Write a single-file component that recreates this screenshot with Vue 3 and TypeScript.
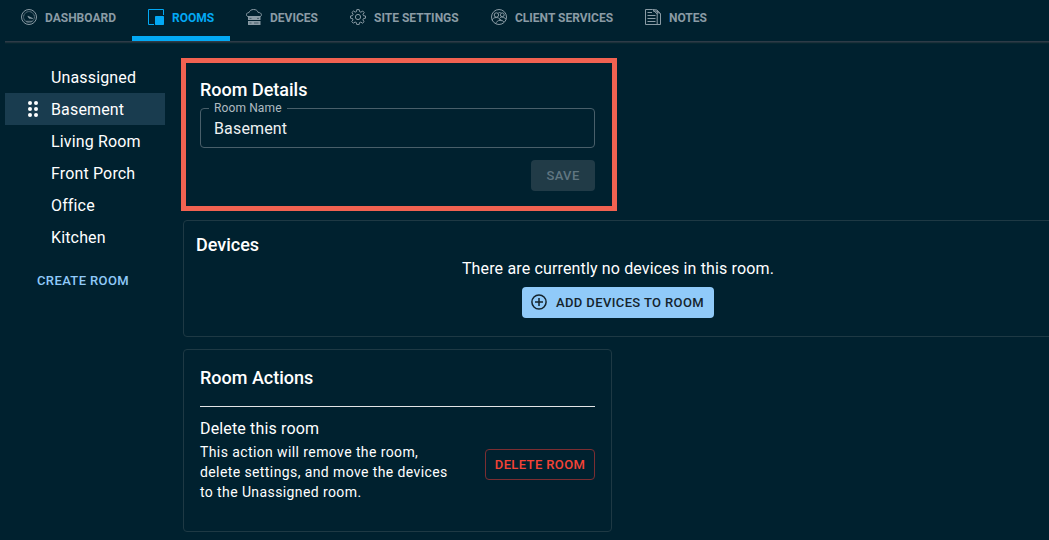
<script setup lang="ts">
import { ref } from 'vue'

interface Tab {
  id: string
  label: string
}

const tabs: Tab[] = [
  { id: 'dashboard', label: 'Dashboard' },
  { id: 'rooms', label: 'Rooms' },
  { id: 'devices', label: 'Devices' },
  { id: 'settings', label: 'Site Settings' },
  { id: 'clients', label: 'Client Services' },
  { id: 'notes', label: 'Notes' },
]
const rooms: string[] = ['Unassigned', 'Basement', 'Living Room', 'Front Porch', 'Office', 'Kitchen']

const activeTab = ref('rooms')
const activeRoom = ref('Basement')
</script>

<template>
  <div class="app">
    <nav class="tabs">
      <button
        v-for="tab in tabs"
        :key="tab.id"
        class="tab"
        :class="[`tab-${tab.id}`, { active: tab.id === activeTab }]"
        @click="activeTab = tab.id"
      >
        <svg class="tab-icon" viewBox="0 0 16 16" fill="none" stroke="currentColor" stroke-width="1">
          <template v-if="tab.id === 'dashboard'">
            <circle cx="8" cy="8" r="7.5" />
            <circle cx="8" cy="8" r="5.4" stroke-width=".8" stroke-dasharray="1 .35" />
            <path d="M4.8 12.3h6.4" stroke-width=".8" />
            <path d="M6.8 7.1l5 2.4-3.8-.3z" fill="currentColor" stroke-width=".6" />
          </template>
          <template v-else-if="tab.id === 'rooms'">
            <path d="M15.5 6V.5H.5v15H6" />
            <rect x="7" y="7" width="9" height="9" rx=".7" fill="currentColor" stroke="none" />
          </template>
          <template v-else-if="tab.id === 'devices'">
            <path d="M2.2 7.6C.8 7.4.3 6.4.5 5.3.7 4.2 1.7 3.5 3 3.6 3.7 1.6 5.3.5 7.6.5c2.4 0 4 1.1 4.6 3 1.8-.1 3.1.8 3.2 2.2.1 1-.5 1.7-1.4 1.9" />
            <path d="M2 7h12.5v4H2zM2 12h12.5v4H2z" fill="currentColor" stroke="none" />
            <path d="M3.5 9.4h2M11 9.4h2M3.5 14h2M8 14h4.5" stroke="#00212f" stroke-width=".5" />
          </template>
          <template v-else-if="tab.id === 'settings'">
            <path d="M6.8 .6h2.4l.4 2 1.3.6 1.8-1.2 1.5 1.6L13 5.3l.5 1.4 2 .3v2.2l-2 .4-.6 1.3 1.2 1.8-1.6 1.5-1.7-1.1-1.3.5-.4 2H6.8l-.4-2-1.3-.6-1.8 1.2-1.5-1.6L3 10.9l-.5-1.4-2-.3V7l2-.4.6-1.3-1.2-1.8L3.5 2l1.7 1.1 1.3-.5z" stroke-linejoin="round" />
            <circle cx="8" cy="8" r="2.6" />
          </template>
          <template v-else-if="tab.id === 'clients'">
            <circle cx="8" cy="8" r="7.5" />
            <circle cx="5.4" cy="6" r="2.2" />
            <circle cx="11.3" cy="5.8" r="1.9" />
            <path d="M1 11.2c.6-1.6 2.2-2.7 4.2-2.7 2 0 3.4.9 4.1 2.5M9 8.5c2-1.1 4.8-.3 6 1.8M4.8 14.8c.5-2.1 2-3.3 4.2-3.5 1.7-.2 2.8.4 3.8 1.5M7.2 4.3c.7-.8 1.5-1 2.5-.5M8.5 9.5l2 2.7" />
          </template>
          <template v-else>
            <path d="M7.5 .5h-7v15h15V4.8L12.2 2v13.5M7.5 .5L12.2 5M8 .5l4 .5 3.5 3.8M8 2h3.5l2 2.3" />
            <path d="M2.5 3.5H7M2.5 6.5h8M2.5 9.5h8M2.5 12.5h8" />
          </template>
        </svg>
        <span class="tab-label">{{ tab.label }}</span>
      </button>
    </nav>

    <div class="layout">
      <aside class="sidebar">
        <ul class="room-list">
          <li
            v-for="room in rooms"
            :key="room"
            class="room"
            :class="{ selected: room === activeRoom }"
            @click="activeRoom = room"
          >
            <span class="handle">
              <svg v-if="room === activeRoom" width="10" height="16" viewBox="0 0 10 16" fill="currentColor">
                <circle cx="2" cy="2" r="2" /><circle cx="8" cy="2" r="2" />
                <circle cx="2" cy="8" r="2" /><circle cx="8" cy="8" r="2" />
                <circle cx="2" cy="14" r="2" /><circle cx="8" cy="14" r="2" />
              </svg>
            </span>
            <span>{{ room }}</span>
          </li>
        </ul>
        <button class="create">Create Room</button>
      </aside>

      <main class="content">
        <section class="details">
          <h2>Room Details</h2>
          <fieldset class="field">
            <legend>Room Name</legend>
            <span class="value">Basement</span>
          </fieldset>
          <button class="save" disabled>Save</button>
        </section>

        <section class="devices">
          <h2>Devices</h2>
          <p>There are currently no devices in this room.</p>
          <button class="add">
            <svg width="16" height="16" viewBox="0 0 16 16" fill="none" stroke="currentColor" stroke-width="1.5">
              <circle cx="8" cy="8" r="7.1" />
              <path d="M8 4v8M4 8h8" />
            </svg>
            <span>Add Devices to Room</span>
          </button>
        </section>

        <section class="actions">
          <h2>Room Actions</h2>
          <hr />
          <div class="action">
            <div class="action-text">
              <h3>Delete this room</h3>
              <p>This action will remove the room, delete settings, and move the devices to the Unassigned room.</p>
            </div>
            <button class="delete">Delete Room</button>
          </div>
        </section>
      </main>
    </div>
  </div>
</template>

<style>
body {
  background: #00212f;
}
</style>

<style scoped>
.app {
  height: 540px;
  box-sizing: border-box;
  padding-left: 5px;
  overflow: hidden;
  background: #00212f;
  color: #fff;
  font-family: Roboto, "Liberation Sans", sans-serif;
}
.app * {
  box-sizing: border-box;
}
button {
  font: inherit;
  color: inherit;
  background: none;
  border: 0;
  padding: 0;
  margin: 0;
  text-transform: uppercase;
  white-space: nowrap;
}
h2, h3, p, ul {
  margin: 0;
  padding: 0;
}
h2 {
  font-size: 18px;
  font-weight: 500;
  line-height: 24px;
}
.tabs {
  display: flex;
  height: 41px;
  box-shadow: 0 1px 0 #2d3b47, 0 2px 0 #1c303b, 0 3px 0 #06262f;
}
.tab {
  display: flex;
  align-items: center;
  gap: 8px;
  padding: 0 0 1px 16px;
  border-bottom: 5px solid transparent;
  color: #8a9ba5;
  font-size: 12px;
  font-weight: 700;
}
.tab.active {
  color: #03a9f4;
  border-bottom-color: #03a9f4;
}
.tab-dashboard { width: 127px; }
.tab-rooms { width: 98px; }
.tab-devices { width: 104px; }
.tab-settings { width: 141px; }
.tab-clients { width: 154px; }
.tab-notes { width: 94px; }
.tab-icon {
  width: 16px;
  height: 16px;
  flex: none;
  margin-top: -1px;
}
.layout {
  display: flex;
}
.sidebar {
  width: 160px;
  padding-top: 20px;
  margin-right: 16px;
  flex: none;
}
.room-list {
  list-style: none;
}
.room {
  display: flex;
  align-items: center;
  height: 32px;
  font-size: 16px;
  letter-spacing: 0.15px;
}
.room.selected {
  background: #193c4f;
}
.handle {
  display: flex;
  width: 46px;
  padding-left: 23px;
}
.create {
  margin: 17px 0 0 32px;
  font-size: 13px;
  font-weight: 500;
  line-height: 22px;
  letter-spacing: 0.38px;
  color: #90caf9;
}
.content {
  flex: 1;
  min-width: 0;
  padding-top: 17px;
}
.details {
  width: 436px;
  height: 153px;
  border: 5px solid #f16251;
  padding: 15px 17px 0 14px;
  display: flex;
  flex-direction: column;
}
.field {
  width: 395px;
  height: 46px;
  margin: 0 0 12px;
  padding: 0 13px;
  border: 1px solid #495f6a;
  border-radius: 4px;
  flex: none;
}
.field legend {
  padding: 0 5px;
  margin-left: -5px;
  font-size: 12px;
  line-height: 12px;
  letter-spacing: 0.12px;
  color: #afbbc1;
}
.value {
  display: block;
  font-size: 16px;
  line-height: 20px;
  margin-top: 5px;
  letter-spacing: 0.15px;
  color: #eef1f2;
}
.save {
  align-self: flex-end;
  width: 64px;
  height: 31px;
  border-radius: 4px;
  background: #213b47;
  color: #607681;
  font-size: 13px;
  font-weight: 500;
  letter-spacing: 0.38px;
}
.devices {
  width: 870px;
  height: 117px;
  margin: 9px 0 12px 2px;
  padding: 12px;
  border: 1px solid #1e3944;
  border-radius: 4px;
  display: flex;
  flex-direction: column;
  align-items: center;
}
.devices h2 {
  align-self: flex-start;
}
.devices p {
  font-size: 16px;
  line-height: 24px;
  letter-spacing: 0.15px;
}
.add {
  display: flex;
  align-items: center;
  gap: 9px;
  width: 192px;
  height: 31px;
  margin-top: 6px;
  padding-left: 9px;
  flex: none;
  border-radius: 4px;
  background: #90caf9;
  color: #14242d;
  font-size: 13px;
  font-weight: 500;
  letter-spacing: 0.38px;
}
.add svg {
  margin-top: -1px;
}
.actions {
  width: 429px;
  height: 183px;
  margin-left: 2px;
  padding: 16px;
  border: 1px solid #1e3944;
  border-radius: 4px;
}
hr {
  height: 1px;
  margin: 16px 0 10px;
  border: 0;
  background: #e2e4e6;
}
.action {
  display: flex;
  justify-content: space-between;
}
.action-text {
  width: 265px;
}
h3 {
  font-size: 16px;
  font-weight: 400;
  line-height: 24px;
  letter-spacing: 0.15px;
}
.action-text p {
  margin-top: 1px;
  padding-right: 10px;
  font-size: 14px;
  line-height: 20px;
  letter-spacing: 0.4px;
}
.delete {
  width: 110px;
  height: 31px;
  margin-top: 32px;
  border: 1px solid #7b2e32;
  border-radius: 4px;
  color: #f44336;
  font-size: 13px;
  font-weight: 500;
  letter-spacing: 0.38px;
}
</style>
